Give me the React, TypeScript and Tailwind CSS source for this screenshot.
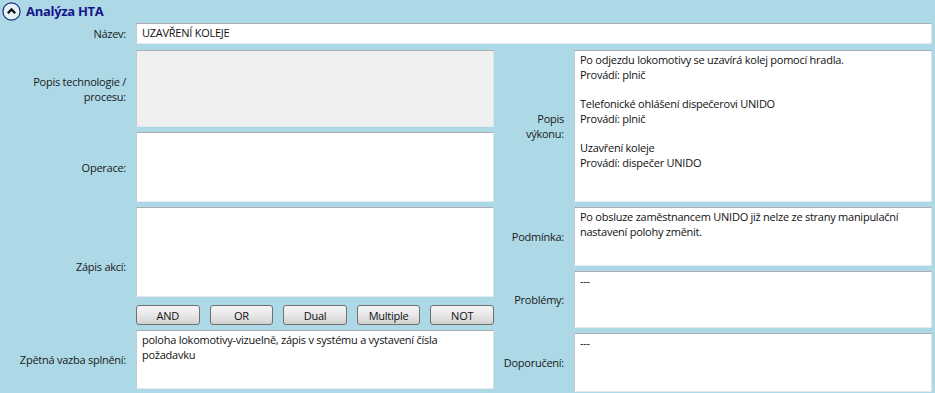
import React from 'react';

const font = { fontFamily: '"Open Sans", "Noto Sans", sans-serif' };

const txt = 'text-[11px] tracking-[-0.25px]';

const boxCls =
    `border border-t-[#abadb3] border-l-[#c5cad1] border-r-[#dbe3ea] border-b-[#e3e9ef] px-[5px] pt-[2px] ${txt} leading-[14.7px] text-[#111]`;

const Box: React.FC<{ h: string; gray?: boolean; lines?: string[] }> = ({ h, gray, lines }) => (
    <div className={`${boxCls} ${h} ${gray ? 'bg-[#f0f0f0]' : 'bg-white'}`}>
        {lines?.map((l, i) => (
            <div key={i} className="min-h-[14.7px] whitespace-pre">
                {l}
            </div>
        ))}
    </div>
);

const Label: React.FC<{ children: React.ReactNode }> = ({ children }) => (
    <div className={`flex items-center justify-end pr-[10px] text-right ${txt} leading-[15px] text-[#1a1a1a]`}>
        {children}
    </div>
);

const buttons = ['AND', 'OR', 'Dual', 'Multiple', 'NOT'];

export default function App() {
    return (
        <div className="w-[935px] h-[393px] overflow-hidden bg-[#add8e6]" style={font}>
            {/* header */}
            <div className="flex items-center h-[23px] pl-[2px] gap-[5px]">
                <svg width="19" height="19" viewBox="0 0 19 19">
                    <circle cx="9.5" cy="9.5" r="8.6" fill="#e4f1f6" stroke="#1b2a80" strokeWidth="1.2" />
                    <path d="M5.8 11.2 L9.5 7.4 L13.2 11.2" fill="none" stroke="#111" strokeWidth="2.2" />
                </svg>
                <span className="text-[13px] tracking-[-0.3px] font-bold text-[#16168a]">Analýza HTA</span>
            </div>

            {/* name */}
            <div className="grid grid-cols-[136px_796px]">
                <Label>Název:</Label>
                <div className={`${boxCls} bg-white h-[21px] pt-[2px]`}>UZAVŘENÍ KOLEJE</div>
            </div>

            <div className="flex mt-[6px]">
                {/* left column */}
                <div className="grid grid-cols-[136px_358px] grid-rows-[77px_70px_118px_59px] gap-y-[5px] w-[494px]">
                    <Label>
                        Popis technologie /<br />procesu:
                    </Label>
                    <Box h="h-[77px]" gray />
                    <Label>Operace:</Label>
                    <Box h="h-[70px]" />
                    <Label>Zápis akcí:</Label>
                    <div className="flex flex-col">
                        <Box h="h-[91px]" />
                        <div className="grid grid-cols-5 gap-x-[10px] mt-[8px]">
                            {buttons.map(b => (
                                <button
                                    key={b}
                                    className={`h-[20px] rounded-[3px] border border-[#707070] bg-gradient-to-b from-[#f4f4f4] via-[#e8e8e8] to-[#d0d0d0] ${txt} leading-none text-[#111]`}
                                >
                                    {b}
                                </button>
                            ))}
                        </div>
                    </div>
                    <Label>Zpětná vazba splnění:</Label>
                    <Box
                        h="h-[59px]"
                        lines={['poloha lokomotivy-vizuelně, zápis v systému a vystavení čísla', 'požadavku']}
                    />
                </div>

                {/* right column */}
                <div className="grid grid-cols-[80px_358px] grid-rows-[152px_59px_57px_59px] gap-y-[5px]">
                    <Label>
                        Popis
                        <br />
                        výkonu:
                    </Label>
                    <Box
                        h="h-[152px]"
                        lines={[
                            'Po odjezdu lokomotivy se uzavírá kolej pomocí hradla.',
                            'Provádí: plnič',
                            '',
                            'Telefonické ohlášení dispečerovi UNIDO',
                            'Provádí: plnič',
                            '',
                            'Uzavření koleje',
                            'Provádí: dispečer UNIDO',
                        ]}
                    />
                    <Label>Podmínka:</Label>
                    <Box
                        h="h-[59px]"
                        lines={['Po obsluze zaměstnancem UNIDO již nelze ze strany manipulační', 'nastavení polohy změnit.']}
                    />
                    <Label>Problémy:</Label>
                    <Box h="h-[57px]" lines={['---']} />
                    <Label>Doporučení:</Label>
                    <Box h="h-[59px]" lines={['---']} />
                </div>
            </div>
        </div>
    );
}
